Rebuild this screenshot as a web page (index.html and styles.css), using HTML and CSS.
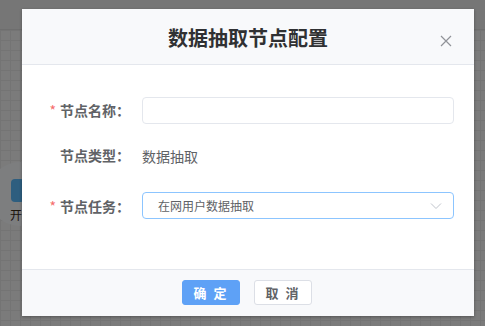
FILE: index.html
```html
<!DOCTYPE html>
<html lang="zh-CN">
<head>
    <meta charset="UTF-8" />
    <title>数据抽取节点配置</title>
    <link rel="stylesheet" href="styles.css">
</head>
<body>
    <div class="workspace">
        <div class="toolbar"></div>
        <div class="canvas">
            <div class="node node-start">
                <div class="node-circle">
                    <span class="node-play"></span>
                </div>
                <div class="node-label">开始</div>
            </div>
        </div>
    </div>

    <div class="mask">
        <div class="dialog">
            <div class="dialog-header">
                <h2 class="dialog-title">数据抽取节点配置</h2>
                <button class="dialog-close" aria-label="关闭">
                    <svg width="12" height="12" viewBox="0 0 12 12">
                        <path d="M1 1 L11 11 M11 1 L1 11" stroke="#909399" stroke-width="1.2" fill="none" />
                    </svg>
                </button>
            </div>

            <div class="dialog-body">
                <div class="form-item">
                    <label class="form-label is-required">节点名称：</label>
                    <div class="form-content">
                        <input class="input" type="text" />
                    </div>
                </div>
                <div class="form-item form-item-text">
                    <label class="form-label">节点类型：</label>
                    <div class="form-content">
                        <span class="form-value">数据抽取</span>
                    </div>
                </div>
                <div class="form-item">
                    <label class="form-label is-required">节点任务：</label>
                    <div class="form-content">
                        <div class="select is-focus">
                            <span class="select-text">在网用户数据抽取</span>
                            <svg class="select-arrow" width="12" height="8" viewBox="0 0 12 8">
                                <path d="M1 1.5 L6 6.5 L11 1.5" stroke="#c0c4cc" stroke-width="1" fill="none" />
                            </svg>
                        </div>
                    </div>
                </div>
            </div>

            <div class="dialog-footer">
                <button class="btn btn-primary">确 定</button>
                <button class="btn">取 消</button>
            </div>
        </div>
    </div>
</body>
</html>
```

FILE: styles.css
```css
* {
    margin: 0;
    padding: 0;
    box-sizing: border-box;
}

body {
    font-family: "Noto Sans CJK SC", "Noto Sans", sans-serif;
    width: 485px;
    height: 326px;
    overflow: hidden;
    position: relative;
    background: #f4f4f4;
}

/* Workspace behind the dialog */
.workspace {
    height: 100%;
    display: flex;
    flex-direction: column;
}

.toolbar {
    height: 30px;
    background: #ececec;
    border-bottom: 1px solid #dcdcdc;
}

.canvas {
    flex: 1;
    position: relative;
    background-color: #f6f6f6;
    background-image:
        linear-gradient(#e8e8e8 1px, transparent 1px),
        linear-gradient(90deg, #e8e8e8 1px, transparent 1px);
    background-size: 10px 10px;
}

.node {
    position: absolute;
    left: -12px;
    top: 132px;
    width: 64px;
    height: 64px;
}

.node-circle {
    width: 64px;
    height: 64px;
    border-radius: 50%;
    background: #fafcff;
    padding: 17px 0 0 23px;
}

.node-play {
    display: block;
    width: 20px;
    height: 23px;
    background: #5cbcff;
    border-radius: 4px 10px 10px 4px;
}

.node-label {
    position: absolute;
    left: 22px;
    top: 44px;
    font-size: 12px;
    color: #3a2a18;
    white-space: nowrap;
}

/* Dialog */
.mask {
    position: absolute;
    top: 0;
    left: 0;
    right: 0;
    bottom: 0;
    background: rgba(0, 0, 0, 0.5);
    padding: 9px 0 0 22px;
}

.dialog {
    width: 452px;
    height: 307px;
    background: #fff;
    display: flex;
    flex-direction: column;
    box-shadow: 0 1px 3px rgba(0, 0, 0, 0.3);
}

.dialog-header {
    height: 56px;
    background: #f8f9fb;
    border-bottom: 1px solid #e4e7ed;
    display: flex;
    align-items: center;
    justify-content: center;
    position: relative;
}

.dialog-title {
    font-size: 20px;
    font-weight: 700;
    color: #303133;
    margin-top: 1px;
}

.dialog-close {
    position: absolute;
    right: 22px;
    top: 26px;
    width: 12px;
    height: 12px;
    border: none;
    background: none;
    display: flex;
}

.dialog-body {
    flex: 1;
    padding: 31px 20px 0 0;
    display: flex;
    flex-direction: column;
}

.form-item {
    display: flex;
    align-items: center;
    height: 27px;
    margin-bottom: 18px;
}

.form-item-text {
    margin-bottom: 24px;
}

.form-label {
    width: 120px;
    padding-right: 12px;
    text-align: right;
    font-size: 14px;
    font-weight: 600;
    color: #606266;
}

.form-label.is-required::before {
    content: "*";
    color: #f56c6c;
    margin-right: 4px;
    font-weight: 400;
}

.form-content {
    flex: 1;
}

.form-value {
    font-size: 14px;
    color: #606266;
}

.input {
    width: 100%;
    height: 27px;
    border: 1px solid #e4e7ed;
    border-radius: 4px;
    outline: none;
    background: #fff;
}

.select {
    height: 27px;
    border: 1px solid #8cc5ff;
    border-radius: 4px;
    display: flex;
    align-items: center;
    justify-content: space-between;
    padding: 0 11px 0 15px;
}

.select-text {
    font-size: 12px;
    color: #606266;
}

/* Footer */
.dialog-footer {
    height: 47px;
    background: #f8f9fb;
    border-top: 1px solid #e4e7ed;
    display: flex;
    justify-content: center;
    align-items: center;
    gap: 14px;
    padding-bottom: 1px;
    padding-right: 2px;
}

.btn {
    width: 58px;
    height: 25px;
    border: 1px solid #dcdfe6;
    border-radius: 3px;
    background: #fff;
    font-family: inherit;
    font-size: 13px;
    font-weight: 700;
    color: #606266;
    letter-spacing: 2px;
}

.btn-primary {
    background: #5ea1f6;
    border-color: #5ea1f6;
    color: #fff;
}
```
